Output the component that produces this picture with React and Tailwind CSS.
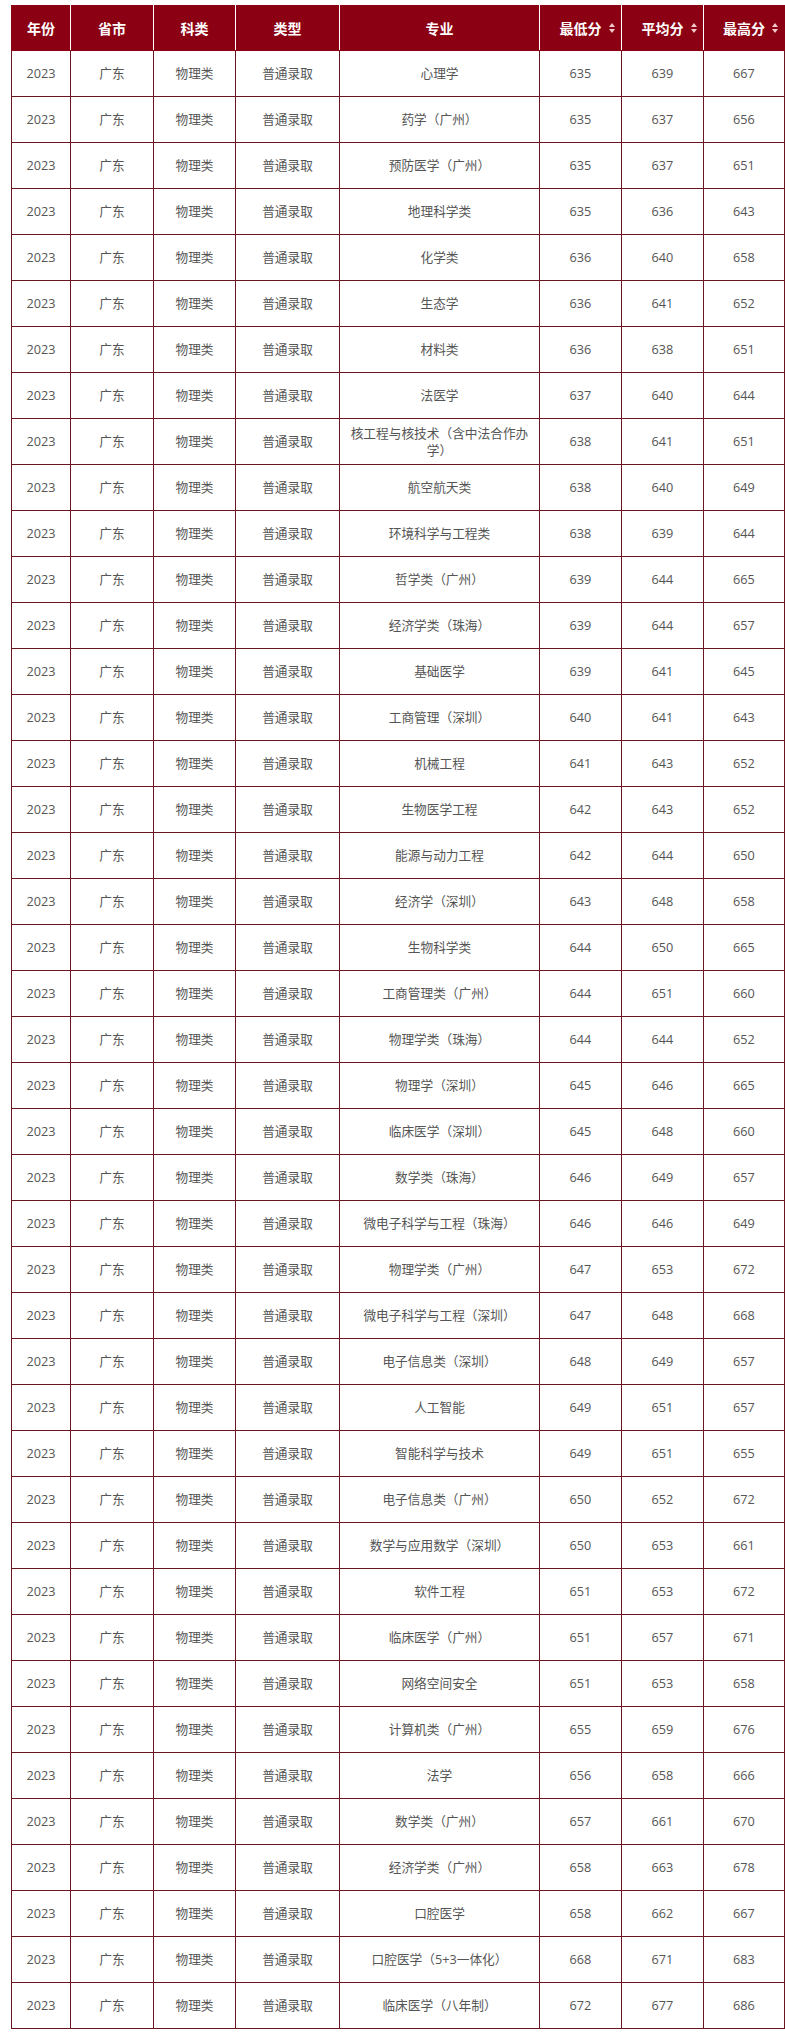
import React from "react";

const rows = [
  ["心理学", 635, 639, 667],
  ["药学（广州）", 635, 637, 656],
  ["预防医学（广州）", 635, 637, 651],
  ["地理科学类", 635, 636, 643],
  ["化学类", 636, 640, 658],
  ["生态学", 636, 641, 652],
  ["材料类", 636, 638, 651],
  ["法医学", 637, 640, 644],
  ["核工程与核技术（含中法合作办学）", 638, 641, 651],
  ["航空航天类", 638, 640, 649],
  ["环境科学与工程类", 638, 639, 644],
  ["哲学类（广州）", 639, 644, 665],
  ["经济学类（珠海）", 639, 644, 657],
  ["基础医学", 639, 641, 645],
  ["工商管理（深圳）", 640, 641, 643],
  ["机械工程", 641, 643, 652],
  ["生物医学工程", 642, 643, 652],
  ["能源与动力工程", 642, 644, 650],
  ["经济学（深圳）", 643, 648, 658],
  ["生物科学类", 644, 650, 665],
  ["工商管理类（广州）", 644, 651, 660],
  ["物理学类（珠海）", 644, 644, 652],
  ["物理学（深圳）", 645, 646, 665],
  ["临床医学（深圳）", 645, 648, 660],
  ["数学类（珠海）", 646, 649, 657],
  ["微电子科学与工程（珠海）", 646, 646, 649],
  ["物理学类（广州）", 647, 653, 672],
  ["微电子科学与工程（深圳）", 647, 648, 668],
  ["电子信息类（深圳）", 648, 649, 657],
  ["人工智能", 649, 651, 657],
  ["智能科学与技术", 649, 651, 655],
  ["电子信息类（广州）", 650, 652, 672],
  ["数学与应用数学（深圳）", 650, 653, 661],
  ["软件工程", 651, 653, 672],
  ["临床医学（广州）", 651, 657, 671],
  ["网络空间安全", 651, 653, 658],
  ["计算机类（广州）", 655, 659, 676],
  ["法学", 656, 658, 666],
  ["数学类（广州）", 657, 661, 670],
  ["经济学类（广州）", 658, 663, 678],
  ["口腔医学", 658, 662, 667],
  ["口腔医学（5+3一体化）", 668, 671, 683],
  ["临床医学（八年制）", 672, 677, 686],
];

const widths = ["w-[59px]", "w-[83px]", "w-[82px]", "w-[104px]", "w-[200px]", "w-[82px]", "w-[82px]", "w-[81px]"];

function SortIcon() {
  return (
    <svg
      className="absolute right-[6px] top-1/2 -translate-y-1/2"
      width="6"
      height="10"
      viewBox="0 0 6 10"
    >
      <path d="M3 0 L6 4 L0 4 Z" fill="#f3c9cc" />
      <path d="M0 6 L6 6 L3 10 Z" fill="#f3c9cc" />
    </svg>
  );
}

function HeadCell({ children, sortable, first, last }) {
  return (
    <th
      className={`relative h-[45px] p-0 text-center text-[14px] font-bold text-white border-y border-y-[#8b0012] ${
        first ? "border-l border-l-[#8b0012]" : "border-l border-l-white"
      } ${last ? "border-r border-r-[#8b0012]" : "border-r border-r-white"}`}
    >
      {children}
      {sortable && <SortIcon />}
    </th>
  );
}

export default function App() {
  return (
    <div className="min-h-screen bg-white pt-[5px] pl-[11px] font-['Open_Sans','Noto_Sans_CJK_SC',sans-serif]">
      <table className="w-[773px] table-fixed border-collapse">
        <colgroup>
          {widths.map((w, i) => (
            <col key={i} className={w} />
          ))}
        </colgroup>
        <thead>
          <tr className="bg-[#8b0012]">
            <HeadCell first>年份</HeadCell>
            <HeadCell>省市</HeadCell>
            <HeadCell>科类</HeadCell>
            <HeadCell>类型</HeadCell>
            <HeadCell>专业</HeadCell>
            <HeadCell sortable>最低分</HeadCell>
            <HeadCell sortable>平均分</HeadCell>
            <HeadCell sortable last>最高分</HeadCell>
          </tr>
        </thead>
        <tbody>
          {rows.map((r, i) => (
            <tr key={i} className="h-[46px]">
              {["2023", "广东", "物理类", "普通录取", r[0], r[1], r[2], r[3]].map((c, j) => (
                <td
                  key={j}
                  className="border border-[#6b1520] px-2 py-0 text-center text-[12.7px] leading-[17px] text-[#555]"
                >
                  {c}
                </td>
              ))}
            </tr>
          ))}
        </tbody>
      </table>
    </div>
  );
}
